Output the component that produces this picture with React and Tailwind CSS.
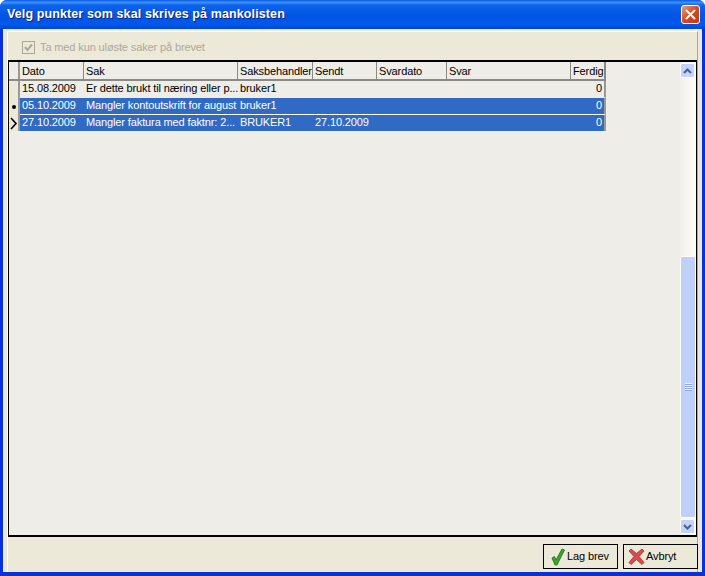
const cols = [
  { label: "Dato", w: "w-[64px]" },
  { label: "Sak", w: "w-[154px]" },
  { label: "Saksbehandler", w: "w-[75px]" },
  { label: "Sendt", w: "w-[64px]" },
  { label: "Svardato", w: "w-[70px]" },
  { label: "Svar", w: "w-[124px]" },
  { label: "Ferdig", w: "w-[35px]", right: true },
];

const rows = [
  { cells: ["15.08.2009", "Er dette brukt til næring eller p...", "bruker1", "", "", "", "0"], sel: false, mark: null },
  { cells: ["05.10.2009", "Mangler kontoutskrift for august", "bruker1", "", "", "", "0"], sel: true, mark: "dot" },
  { cells: ["27.10.2009", "Mangler faktura med faktnr: 2...", "BRUKER1", "27.10.2009", "", "", "0"], sel: true, mark: "arrow", last: true },
];

function Row({ row }) {
  return (
    <div className={"flex " + (row.last ? "h-[16px]" : "h-[17px]")}>
      <div className="w-[11px] bg-[#ece9d8] border-r-2 border-[#9a9a94] flex items-center justify-center shrink-0">
        {row.mark === "dot" && <div className="w-[4px] h-[4px] rounded-full bg-black ml-[1px]" />}
        {row.mark === "arrow" && (
          <svg width="8" height="13" viewBox="0 0 8 13" fill="none" stroke="#000" strokeWidth="1.6">
            <path d="M1 1l5 5.5L1 12" />
          </svg>
        )}
      </div>
      <div className={"flex border-r-2 border-[#9a9a94] " + (row.last ? "" : "border-b ") + (row.sel ? "bg-[#316ac5] text-white border-b-white" : "bg-[#eeede8] text-black border-b-[#eeede8]")}>
        {cols.map((c, i) => (
          <div key={i} className={(c.right ? "w-[33px] text-right" : c.w) + " shrink-0 whitespace-nowrap overflow-hidden leading-[15px] px-[2px]"}>
            {row.cells[i]}
          </div>
        ))}
      </div>
    </div>
  );
}

function ScrollButton({ up }) {
  return (
    <div className="w-[15px] h-[15px] rounded-[2px] border border-white bg-[#c3d3fb] flex items-center justify-center shrink-0">
      <svg width="9" height="6" viewBox="0 0 9 6" fill="none" stroke="#4d6185" strokeWidth="2">
        <path d={up ? "M1 5l3.5-3.5L8 5" : "M1 1l3.5 3.5L8 1"} />
      </svg>
    </div>
  );
}

export default function App() {
  return (
    <div className="w-[705px] h-[576px] flex flex-col bg-[#0831d9] rounded-t-[7px] overflow-hidden text-[11px] tracking-[-0.12px] font-['Liberation_Sans',sans-serif]">
      <div className="h-[29px] shrink-0 flex items-center justify-between pl-[7px] pr-[5px] bg-[linear-gradient(180deg,#0a58e0_0%,#3a93ff_8%,#0f62ea_18%,#0055e5_55%,#0058ee_85%,#0046c8_100%)]">
        <span className="text-white font-bold text-[12.5px] tracking-[0.11px] [text-shadow:1px_1px_0_#0f1f7a]">
          Velg punkter som skal skrives på mankolisten
        </span>
        <div className="w-[19px] h-[19px] rounded-[3px] border border-white bg-[linear-gradient(135deg,#ef9a7c,#d9481f_50%,#c43a12)] flex items-center justify-center">
          <svg width="11" height="11" viewBox="0 0 11 11" stroke="#fff" strokeWidth="2">
            <path d="M1 1l9 9M10 1l-9 9" />
          </svg>
        </div>
      </div>
      <div className="flex-1 mx-[3px] mb-[4px] bg-[#ece9d8] flex flex-col min-h-0 pt-[2px]">
        <div className="mx-[4px] border-t border-l border-white border-r border-r-[#aca899] flex flex-col flex-1 min-h-0">
          <div className="h-[28px] shrink-0 flex items-center pl-[14px] gap-[5px] pt-[3px] text-[#aca899]">
            <div className="w-[13px] h-[13px] border border-[#aca899] bg-[#ece9d8] flex items-center justify-center">
              <svg width="9" height="9" viewBox="0 0 9 9" fill="none" stroke="#aca899" strokeWidth="2">
                <path d="M1 4l2.5 3L8 1.5" />
              </svg>
            </div>
            <span>Ta med kun uløste saker på brevet</span>
          </div>
          <div className="h-[477px] shrink-0 border-2 border-black border-x-[1.5px] bg-[#eeede8] flex justify-between">
            <div className="flex flex-col">
              <div className="flex h-[19px] border-b-2 border-[#8a8a84]">
                <div className="w-[11px] border-r-2 border-[#9a9a94] shrink-0" />
                {cols.map((c, i) => (
                  <div key={i} className={c.w + " shrink-0 border-r border-[#8a8a84] leading-[17px] pt-[1px] px-[2px] whitespace-nowrap overflow-hidden text-black " + (c.right ? "border-r-2 text-right" : "")}>
                    {c.label}
                  </div>
                ))}
              </div>
              {rows.map((r, i) => <Row key={i} row={r} />)}
            </div>
            <div className="w-[16px] flex flex-col py-[1px] bg-[linear-gradient(90deg,#f0efe8,#fdfdfa)]">
              <ScrollButton up />
              <div className="flex-1 flex flex-col justify-end min-h-0 pb-[1px]">
                <div className="h-[262px] rounded-[2px] border border-white bg-[#c0d0f8] flex items-center justify-center">
                  <div className="w-[7px] h-[8px] bg-[repeating-linear-gradient(180deg,#eef3ff_0,#eef3ff_1px,#8da8e0_1px,#8da8e0_2px)]" />
                </div>
              </div>
              <ScrollButton />
            </div>
          </div>
          <div className="flex-1 flex justify-end items-start pt-[7px] gap-[5px] -mx-px">
            <button className="w-[75px] h-[25px] border border-black bg-[#ece9d8] flex items-center pl-[7px] gap-[2px] text-black">
              <svg width="14" height="18" viewBox="0 0 14 18">
                <path d="M1 10l2.5-1.5L5 12 11 1l2.5 1L6 17H4z" fill="#3ca52e" stroke="#1c6b17" strokeWidth="0.8" />
              </svg>
              <span>Lag brev</span>
            </button>
            <button className="w-[75px] h-[25px] border border-black bg-[#ece9d8] flex items-center pl-[4px] gap-[1px] text-black">
              <svg width="17" height="17" viewBox="0 0 17 17">
                <path d="M1 3l2-2 5.5 4.5L14 1l2 2-5 5.5 5 6-2 2-5.5-5-5.5 5-2-2 5-6z" fill="#dd4a4f" stroke="#a8282c" strokeWidth="0.8" />
              </svg>
              <span>Avbryt</span>
            </button>
          </div>
        </div>
      </div>
    </div>
  );
}
